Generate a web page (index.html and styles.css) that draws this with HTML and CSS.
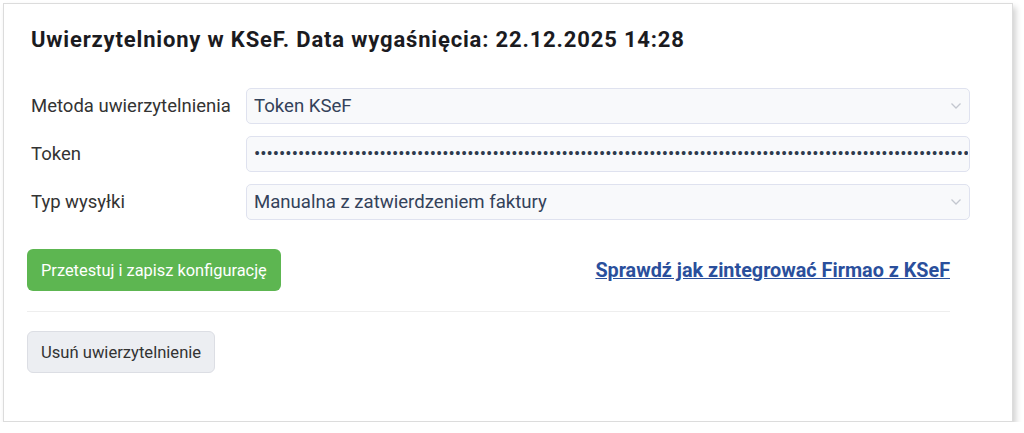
FILE: index.html
```html
<!DOCTYPE html>
<html lang="pl">

<head>
    <meta charset="UTF-8">
    <meta name="viewport" content="width=device-width, initial-scale=1.0">
    <title>KSeF</title>
    <link rel="stylesheet" href="styles.css">
</head>

<body>
    <div class="ksef-card">
        <h2>Uwierzytelniony w KSeF. Data wygaśnięcia: 22.12.2025 14:28</h2>

        <form class="ksef-form">
            <!-- Metoda -->
            <div class="form-row">
                <label for="method">Metoda uwierzytelnienia</label>
                <div class="select-wrap">
                    <select id="method" name="method">
                        <option>Token KSeF</option>
                        <option>Certyfikat</option>
                    </select>
                    <svg class="chevron" width="12" height="8" viewBox="0 0 12 8">
                        <path d="M1.5 1.5 L6 6 L10.5 1.5" fill="none" stroke="#c3c7cf" stroke-width="1.3" />
                    </svg>
                </div>
            </div>

            <!-- Token -->
            <div class="form-row">
                <label for="token">Token</label>
                <input type="password" id="token" name="token"
                    value="aaaaaaaaaaaaaaaaaaaaaaaaaaaaaaaaaaaaaaaaaaaaaaaaaaaaaaaaaaaaaaaaaaaaaaaaaaaaaaaaaaaaaaaaaaaaaaaaaaaaaaaaaaaaaaaaaaaaaaaaaaaaaaaaaaaaaaaaaaaaaaaaaaaaaaaaaaaaaaaaaaaaaaaaaaaaaaaaaaaaaaaaaaaaaaaaaaaa">
            </div>

            <!-- Typ wysylki -->
            <div class="form-row">
                <label for="send_type">Typ wysyłki</label>
                <div class="select-wrap">
                    <select id="send_type" name="send_type">
                        <option>Manualna z zatwierdzeniem faktury</option>
                        <option>Automatyczna</option>
                    </select>
                    <svg class="chevron" width="12" height="8" viewBox="0 0 12 8">
                        <path d="M1.5 1.5 L6 6 L10.5 1.5" fill="none" stroke="#c3c7cf" stroke-width="1.3" />
                    </svg>
                </div>
            </div>

            <div class="actions">
                <button type="submit" class="btn btn-green">Przetestuj i zapisz konfigurację</button>
                <a href="#" class="help-link">Sprawdź jak zintegrować Firmao z KSeF</a>
            </div>
        </form>

        <hr>

        <button type="button" class="btn btn-gray">Usuń uwierzytelnienie</button>
    </div>
</body>

</html>
```

FILE: styles.css
```css
body {
    margin: 0;
    font-family: Roboto, "Liberation Sans", sans-serif;
    background-color: #ffffff;
    color: #333;
}

.ksef-card {
    width: 1010px;
    height: 419px;
    margin: 3px 0 0 3px;
    box-sizing: border-box;
    border: 1px solid #dcdcdc;
    background: #fff;
    box-shadow: 3px 4px 6px rgba(0, 0, 0, 0.18);
    padding: 0 62px 0 23px;
}

.ksef-card h2 {
    margin: 0;
    padding: 22px 0 0 4px;
    font-size: 22px;
    line-height: 28px;
    letter-spacing: 0.83px;
    font-weight: bold;
    color: #1b1b1f;
    white-space: nowrap;
}

.ksef-form {
    margin-top: 34px;
    margin-right: -20px;
}

.form-row {
    display: grid;
    grid-template-columns: 219px 1fr;
    align-items: center;
    margin-bottom: 12px;
}

.form-row label {
    padding-left: 4px;
    font-size: 18.5px;
    color: #333;
}

.select-wrap {
    position: relative;
}

.form-row select,
.form-row input {
    width: 100%;
    height: 36px;
    box-sizing: border-box;
    border: 1px solid #dfe2ef;
    border-radius: 5px;
    background: #f8f9fb;
    font-family: Roboto, "Liberation Sans", sans-serif;
    font-size: 18.6px;
    color: #34425a;
    padding: 0 1px 0 7px;
    outline: none;
}

.form-row select {
    appearance: none;
    -webkit-appearance: none;
}

.form-row input[type="password"] {
    color: #2d3a4d;
}

.chevron {
    position: absolute;
    right: 8px;
    top: 14px;
    pointer-events: none;
}

.actions {
    display: flex;
    justify-content: space-between;
    align-items: center;
    margin-top: 29px;
    margin-right: 20px;
}

.btn {
    height: 42px;
    box-sizing: border-box;
    border-radius: 6px;
    font-family: Roboto, "Liberation Sans", sans-serif;
    cursor: pointer;
}

.btn-green {
    border: none;
    background-color: #5db651;
    color: #fff;
    font-size: 16.4px;
    padding: 0 14px;
}

.btn-green:hover {
    background-color: #4fa544;
}

.help-link {
    font-size: 19.8px;
    font-weight: bold;
    color: #2a4f9c;
    text-decoration: underline;
}

hr {
    border: none;
    border-top: 1px solid #eeeeee;
    margin: 20px 0 19px 0;
}

.btn-gray {
    border: 1px solid #dcdee4;
    background-color: #eceef2;
    color: #333;
    font-size: 16.6px;
    padding: 0 13px;
}
```
